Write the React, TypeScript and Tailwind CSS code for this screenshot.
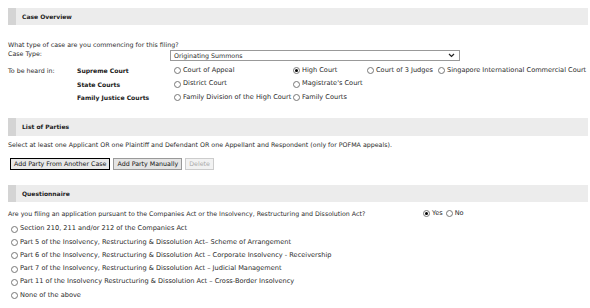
import React from 'react';

const Radio: React.FC<{ checked?: boolean; label: string }> = ({ checked, label }) => (
    <span className="inline-flex items-center gap-[2px] whitespace-nowrap">
        <span className="w-[7px] h-[7px] rounded-full border border-[#777] bg-white flex items-center justify-center shrink-0">
            {checked && <span className="w-[3px] h-[3px] rounded-full bg-black" />}
        </span>
        <span className="text-[6.6px]">{label}</span>
    </span>
);

const SectionBar: React.FC<{ title: string; h: string }> = ({ title, h }) => (
    <div className={`flex ${h} bg-[#ececec]`}>
        <div className="w-[8px] bg-[#d4d4d4]" />
        <div className="flex items-center pl-[6px] font-bold text-[6px] text-[#222]">{title}</div>
    </div>
);

const App: React.FC = () => {
    const questions = [
        'Section 210, 211 and/or 212 of the Companies Act',
        'Part 5 of the Insolvency, Restructuring & Dissolution Act– Scheme of Arrangement',
        'Part 6 of the Insolvency, Restructuring & Dissolution Act – Corporate Insolvency - Receivership',
        'Part 7 of the Insolvency, Restructuring & Dissolution Act – Judicial Management',
        'Part 11 of the Insolvency Restructuring & Dissolution Act – Cross-Border Insolvency',
        'None of the above',
    ];

    return (
        <div className="w-[590px] h-[308px] overflow-hidden bg-white pt-[8px] pl-[8px] pr-[2px] font-['DejaVu_Sans',sans-serif] text-[6.3px] text-[#2a2a2a]">
            <SectionBar title="Case Overview" h="h-[17px]" />

            <div className="mt-[15px] h-[9px] flex items-center">What type of case are you commencing for this filing?</div>
            <div className="flex items-start h-[12px]">
                <div className="w-[162px] pt-[1px] leading-[8px]">Case Type:</div>
                <div className="w-[290px] h-[11px] mt-[1px] border border-[#999] bg-white flex items-center justify-between pl-[3px] pr-[4px]">
                    <span>Originating Summons</span>
                    <svg width="7" height="5" viewBox="0 0 7 5">
                        <path d="M1 1 L3.5 3.5 L6 1" fill="none" stroke="#222" strokeWidth="1.2" />
                    </svg>
                </div>
            </div>

            <div className="mt-[3px] grid grid-cols-[69px_97px_119px_74px_71px_1fr] auto-rows-[13.5px] items-center">
                <div>To be heard in:</div>
                <div className="font-bold text-[6.1px] text-[#1a1a1a]">Supreme Court</div>
                <Radio label="Court of Appeal" />
                <Radio checked label="High Court" />
                <Radio label="Court of 3 Judges" />
                <Radio label="Singapore International Commercial Court" />

                <div />
                <div className="font-bold text-[6.1px] text-[#1a1a1a]">State Courts</div>
                <Radio label="District Court" />
                <Radio label="Magistrate's Court" />
                <div />
                <div />

                <div />
                <div className="font-bold text-[6.1px] text-[#1a1a1a]">Family Justice Courts</div>
                <Radio label="Family Division of the High Court" />
                <Radio label="Family Courts" />
                <div />
                <div />
            </div>

            <div className="mt-[13px]">
                <SectionBar title="List of Parties" h="h-[18px]" />
            </div>
            <div className="mt-[5px] h-[8px] flex items-center">
                Select at least one Applicant OR one Plaintiff and Defendant OR one Appellant and Respondent (only for POFMA appeals).
            </div>
            <div className="mt-[9px] pl-[2px] flex gap-[3px] h-[12px]">
                <button className="h-full px-[3px] border border-black bg-[#e8e8e8] text-[#111]">Add Party From Another Case</button>
                <button className="h-full px-[3px] border border-[#999] bg-[#e4e4e4] text-[#111]">Add Party Manually</button>
                <button className="h-full px-[3px] border border-[#ccc] bg-[#f2f2f2] text-[#aaa]" disabled>Delete</button>
            </div>

            <div className="mt-[15px]">
                <SectionBar title="Questionnaire" h="h-[17px]" />
            </div>
            <div className="mt-[7px] h-[10px] flex items-center">
                <div className="w-[415px]">Are you filing an application pursuant to the Companies Act or the Insolvency, Restructuring and Dissolution Act?</div>
                <div className="flex gap-[3px]">
                    <Radio checked label="Yes" />
                    <Radio label="No" />
                </div>
            </div>
            <div className="mt-[4px] pl-[3px] flex flex-col">
                {questions.map((q) => (
                    <div key={q} className="h-[13.3px] flex items-center">
                        <Radio label={q} />
                    </div>
                ))}
            </div>
        </div>
    );
};

export default App;
